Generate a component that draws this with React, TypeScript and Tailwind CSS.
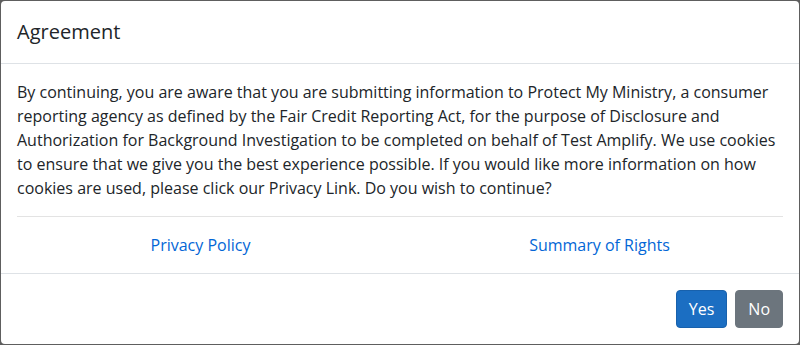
import React from 'react';

export default function App() {
  return (
    <div
      className="w-[800px] h-[345px] bg-[#5e5e5e] p-px"
      style={{ fontFamily: '"Open Sans", "Liberation Sans", sans-serif' }}
    >
      <div className="h-full bg-white rounded-[4px] flex flex-col text-[#212529]">
        {/* Header */}
        <div className="px-4 py-4 border-b border-[#dee2e6]">
          <h5 className="text-[20px] leading-[30px] font-normal">Agreement</h5>
        </div>

        {/* Body */}
        <div className="p-4 text-[16px] leading-[24px]">
          <p>
            By continuing, you are aware that you are submitting information to Protect My Ministry, a consumer
            reporting agency as defined by the Fair Credit Reporting Act, for the purpose of Disclosure and
            Authorization for Background Investigation to be completed on behalf of Test Amplify. We use cookies
            to ensure that we give you the best experience possible. If you would like more information on how
            cookies are used, please click our Privacy Link. Do you wish to continue?
          </p>
          <hr className="my-4 border-0 border-t border-[#e3e3e3]" />
          <div className="-mx-4 grid grid-cols-2 text-center">
            <a href="#" className="text-[#0366d6]">Privacy Policy</a>
            <a href="#" className="text-[#0366d6]">Summary of Rights</a>
          </div>
        </div>

        {/* Footer */}
        <div className="mt-auto border-t border-[#dee2e6] p-3 flex justify-end">
          <button className="m-1 h-[38px] px-3 rounded-[4px] bg-[#1b6ec2] border border-[#1861ac] text-white text-[16px]">
            Yes
          </button>
          <button className="m-1 h-[38px] px-3 rounded-[4px] bg-[#6c757d] border border-[#6c757d] text-white text-[16px]">
            No
          </button>
        </div>
      </div>
    </div>
  );
}
